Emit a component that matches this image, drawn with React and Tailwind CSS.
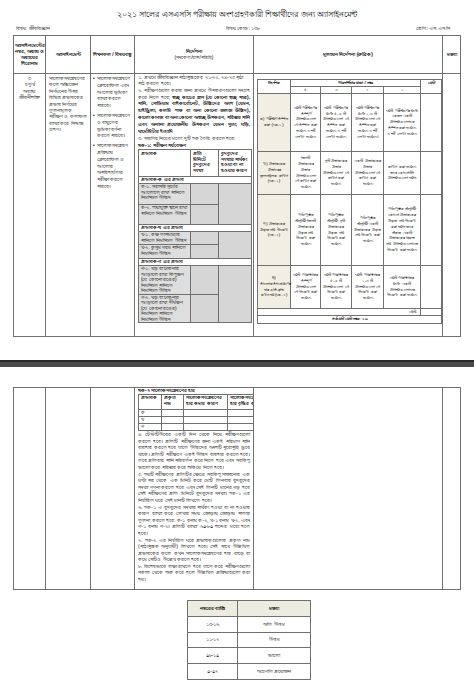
const line = 'border-[#707070]'

const rubric = [
  {
    label: 'ক) পরীক্ষণ সম্পন্ন করা (ছক-১)',
    h: 'h-[58px]',
    cells: [
      'ছয়টি পরীক্ষণের সম্পূর্ণ প্রক্রিয়াগুলো যে সম্পন্ন করা হয়েছে ও শর্ট লেখা হয়েছে',
      'ছয়টি পরীক্ষণের মধ্যে ৪-৫ টি প্রক্রিয়াগুলো যে সম্পন্ন করা হয়েছে ও শর্ট লেখা হয়েছে',
      'ছয়টি পরীক্ষণের মধ্যে ১-৩ টি প্রক্রিয়াগুলো যে সম্পন্ন করা হয়েছে ও শর্ট লেখা হয়েছে।',
      'ছয়টি পরীক্ষণের মধ্যে কেবল একটি প্রক্রিয়াগুলোকে সম্পন্ন করা হয়েছে ও শর্ট লেখা হয়েছে',
    ],
  },
  {
    label: 'খ) প্রভাবকের প্রভাবের তুলনামূলক ব্যাখ্যা (ছক-১)',
    h: 'h-[43px]',
    cells: [
      'তিনটি প্রভাবকের প্রভাব প্রক্রিয়াগুলো যে ব্যাখ্যা করা হয়েছে',
      'দুটি প্রভাবকের প্রভাব প্রক্রিয়াগুলো যে ব্যাখ্যা করা হয়েছে',
      'একটি প্রভাবকের প্রভাব প্রক্রিয়াগুলো যে ব্যাখ্যা করা হয়েছে',
      'ব্যাখ্যা করা হয়েছে তবে কোনোটিই প্রক্রিয়াগুলো হয়নি',
    ],
  },
  {
    label: 'গ) প্রভাবকের প্রকৃত নাম উল্লেখ (ছক-২)',
    h: 'h-[71px]',
    cells: [
      'পাঠ্যপুস্তক অনুযায়ী তিনটি প্রভাবকের প্রকৃত নাম উল্লেখ করা হয়েছে',
      'পাঠ্যপুস্তক অনুযায়ী দুটি প্রভাবকের প্রকৃত নাম উল্লেখ করা হয়েছে',
      'পাঠ্যপুস্তক অনুযায়ী একটি প্রভাবকের প্রকৃত নাম উল্লেখ করা হয়েছে',
      'পাঠ্যপুস্তক অনুযায়ী কোনো প্রভাবকের প্রকৃত নাম উল্লেখ করা হয়নি তবে অন্তত একটি প্রভাবকের বিকল্প নাম প্রক্রিয়াগুলোতে উল্লেখ করা হয়েছে',
    ],
  },
  {
    label: 'ঘ) সালোকসংশ্লেষণের হার হ্রাস-বৃদ্ধি কখন হয় (ছক-২)',
    h: 'h-[43px]',
    cells: [
      'ছয়টি পরিস্থিতির সম্পূর্ণ প্রক্রিয়াগুলো যে উল্লেখ করা হয়েছে',
      'ছয়টি পরিস্থিতির ৪-৫ টি প্রক্রিয়াগুলো যে উল্লেখ করা হয়েছে',
      'ছয়টি পরিস্থিতির ১-৩ টি প্রক্রিয়াগুলো যে উল্লেখ করা হয়েছে',
      'ছয়টি পরিস্থিতির মধ্যে একটি প্রক্রিয়াগুলোতে উল্লেখ করা হয়েছে',
    ],
  },
]

const groups = [
  {
    title: 'প্রভাবক-ক এর প্রভাব',
    rows: [
      { text: 'ক-১. সরাসরি সূর্যের আলোতে রাখা পানিতে নিমজ্জিত উদ্ভিদ', h: 'h-[21px]' },
      { text: 'ক-২. ছায়াযুক্ত স্থানে রাখা পানিতে নিমজ্জিত উদ্ভিদ', h: 'h-[20px]' },
    ],
  },
  {
    title: 'প্রভাবক-খ এর প্রভাব',
    rows: [
      { text: 'খ-১. কক্ষ তাপমাত্রার পানিতে নিমজ্জিত উদ্ভিদ', h: 'h-[13px]' },
      { text: 'খ-২. কুসুম গরম পানিতে নিমজ্জিত উদ্ভিদ', h: 'h-[14px]' },
    ],
  },
  {
    title: 'প্রভাবক-গ এর প্রভাব',
    rows: [
      { text: 'গ-১. খড় বা ঢাকনার আড়ালে রাখা কিছুক্ষণ (যে কোনো রঙের) নিমজ্জিত পানিতে নিমজ্জিত উদ্ভিদ', h: 'h-[28px]' },
      { text: 'গ-২. খড় বা ঢাকনার আড়ালে রাখা দীর্ঘক্ষণ (যে কোনো রঙের) নিমজ্জিত পানিতে নিমজ্জিত উদ্ভিদ', h: 'h-[28px]' },
    ],
  },
]

const grades = [
  ['১৩-১৬', 'অতি উত্তম'],
  ['১১-১২', 'উত্তম'],
  ['০৮-১০', 'ভালো'],
  ['০-০৭', 'অগ্রগতি প্রয়োজন'],
]

function Rubric() {
  return (
    <table className="w-[184px] table-fixed border-collapse text-[4.3px] leading-[5.8px]">
      <colgroup>
        <col className="w-[33px]" />
        <col className="w-[30px]" />
        <col className="w-[31px]" />
        <col className="w-[32px]" />
        <col className="w-[37px]" />
        <col className="w-[21px]" />
      </colgroup>
      <tbody>
        <tr className="h-[6px] font-bold">
          <td rowSpan={2} className={`border ${line} text-center align-top`}>নির্দেশক</td>
          <td colSpan={4} className={`border ${line} text-center`}>পারদর্শিতার মাত্রা / নম্বর</td>
          <td rowSpan={2} className={`border ${line} text-center align-top`}>মোট</td>
        </tr>
        <tr className="h-[6px]">
          {['৪', '৩', '২', '১'].map((n) => (
            <td key={n} className={`border ${line} text-center`}>{n}</td>
          ))}
        </tr>
        {rubric.map((r) => (
          <tr key={r.label} className={r.h}>
            <td className={`border ${line} bg-[#f1efe4] px-[2px] text-center`}>{r.label}</td>
            {r.cells.map((c, i) => (
              <td key={i} className={`border ${line} px-[2px] text-center`}>{c}</td>
            ))}
            <td className={`border ${line}`} />
          </tr>
        ))}
        <tr className="h-[7px]">
          <td colSpan={5} className={`border ${line} pr-[3px] text-right`}>মোট-</td>
          <td className={`border ${line}`} />
        </tr>
        <tr className="h-[8px]">
          <td colSpan={6} className={`border ${line} text-center font-bold`}>সর্বমোট মোট নম্বর: ১৬</td>
        </tr>
      </tbody>
    </table>
  )
}

function ObservationTable() {
  return (
    <table className="w-[113px] table-fixed border-collapse text-[4.5px] leading-[5.5px]">
      <colgroup>
        <col className="w-[52px]" />
        <col className="w-[28px]" />
        <col className="w-[33px]" />
      </colgroup>
      <tbody>
        <tr className="h-[27px] font-bold">
          <td className={`border ${line} px-[2px] pt-[1px] align-top`}>প্রভাবক</td>
          <td className={`border ${line} px-[2px] pt-[1px] align-top`}>প্রতি মিনিটে বুদবুদের সংখ্যা</td>
          <td className={`border ${line} px-[2px] pt-[1px] align-top`}>বুদবুদের সংখ্যার পার্থক্য হওয়া বা না হওয়ার কারণ</td>
        </tr>
        {groups.map((g) => [
          <tr key={g.title} className="h-[7px]">
            <td colSpan={3} className={`border ${line} px-[2px] font-bold`}>{g.title}</td>
          </tr>,
          ...g.rows.map((r, i) => (
            <tr key={r.text} className={r.h}>
              <td className={`border ${line} bg-[#dedede] px-[2px] align-top`}>{r.text}</td>
              <td className={`border ${line} bg-[#d6d6d6]`} />
              {i === 0 && <td rowSpan={2} className={`border ${line} bg-[#d6d6d6]`} />}
            </tr>
          )),
        ])}
      </tbody>
    </table>
  )
}

function PageOne() {
  return (
    <div className="pt-[7px]">
      <h1 className="h-[16px] text-center text-[8.2px] leading-[16px]">
        ২০২১ সালের এসএসসি পরীক্ষায় অংশগ্রহণকারী শিক্ষার্থীদের জন্য অ্যাসাইনমেন্ট
      </h1>
      <div className="flex h-[12px] items-center px-[16px] text-[5px]">
        <span className="w-[210px]">বিষয়: জীববিজ্ঞান</span>
        <span>বিষয় কোড: ১৩৮</span>
        <span className="ml-auto pr-[8px]">শ্রেণি: এস.এস.সি</span>
      </div>

      <div className={`ml-[13px] w-[448px] border ${line}`}>
        {/* header */}
        <div className={`flex h-[38px] border-b ${line} text-[4.8px] leading-[6px] font-bold`}>
          <div className={`w-[32px] border-r ${line} flex items-center justify-center px-[1px] text-center`}>
            অ্যাসাইনমেন্টের নম্বর, অধ্যায় ও অধ্যায়ের শিরোনাম
          </div>
          <div className={`w-[45px] border-r ${line} flex items-center justify-center`}>অ্যাসাইনমেন্ট</div>
          <div className={`w-[44px] border-r ${line} flex items-center justify-center text-center`}>
            শিখনফল / বিষয়বস্তু
          </div>
          <div className={`w-[119px] border-r ${line} flex flex-col items-center justify-center`}>
            <span>নির্দেশনা</span>
            <span className="font-normal">(সংকেত/ধাপ/পরিধি)</span>
          </div>
          <div className={`w-[189px] border-r ${line} flex items-center justify-center`}>
            মূল্যায়ন নির্দেশনা (রুব্রিক)
          </div>
          <div className="flex flex-1 items-center justify-center">মন্তব্য</div>
        </div>

        {/* body */}
        <div className="flex h-[262px] text-[4.8px] leading-[6.4px]">
          <div className={`w-[32px] border-r ${line} pt-[2px] text-center`}>
            <p>৩</p>
            <p>চতুর্থ</p>
            <p>অধ্যায়:</p>
            <p>জীবনীশক্তি</p>
          </div>
          <div className={`w-[45px] border-r ${line} px-[3px] pt-[2px]`}>
            সালোকসংশ্লেষণের ফলে অক্সিজেন নির্গমনের উপর বিভিন্ন প্রভাবকের প্রভাব নির্ণয়ের তুলনামূলক পরীক্ষণ ও ফলাফল ব্যাখ্যা করে সিদ্ধান্ত গ্রহণ।
          </div>
          <div className={`w-[44px] border-r ${line} px-[2px] pt-[2px] leading-[6.8px]`}>
            <ul className="flex flex-col gap-[3px]">
              <li className="flex gap-[2px]"><span>•</span><span>সালোকসংশ্লেষণে ক্লোরোফিল এবং আলোর ভূমিকা ব্যাখ্যা করতে পারবে।</span></li>
              <li className="flex gap-[2px]"><span>•</span><span>সালোকসংশ্লেষণে ও বায়ুতের ভূমিকা বর্ণনা করতে পারবে।</span></li>
              <li className="flex gap-[2px]"><span>•</span><span>সালোকসংশ্লেষণ প্রক্রিয়ায় ক্লোরোফিল ও আলোর অপরিহার্যতার পরীক্ষা করতে পারবে।</span></li>
            </ul>
          </div>
          <div className={`w-[119px] border-r ${line} px-[3px] pt-[1px]`}>
            <p>১. প্রথমে জীববিজ্ঞান পাঠ্যপুস্তকের ৭১-৭২, ৭৪-৭৫ পৃষ্ঠা পাঠ করতে হবে।</p>
            <p className="text-justify leading-[6.8px]">
              ২. পরীক্ষণগুলো করার জন্য প্রথমে উপকরণগুলো সংগ্রহ করে নিতে হবে;{' '}
              <b>
                স্বচ্ছ কাচের গ্লাস (যে কোনো স্বচ্ছ পাত্র), পানি, সোডিয়াম বাইকার্বোনেট, উদ্ভিদের অংশ (যেমন, হাইড্রিলা, কলমি শাক বা অন্য কোনো জলজ উদ্ভিদ), কালো কাগজ বা অন্য কোনো অস্বচ্ছ উপকরণ, পরিষ্কার পানি এবং অন্যান্য প্রয়োজনীয় উপকরণ যেমন সুতা, ঘড়ি, থার্মোমিটার ইত্যাদি
              </b>
            </p>
            <p className="mt-[1px]">৩. সারণির নিচের মতো দুটি ছক তৈরি করতে হবে:</p>
            <p className="font-bold">ছক-১: পরীক্ষণ পর্যবেক্ষণ</p>
            <ObservationTable />
          </div>
          <div className={`w-[189px] border-r ${line} px-[3px] pt-[5px]`}>
            <Rubric />
          </div>
          <div className="flex-1" />
        </div>
      </div>
    </div>
  )
}

function PageTwo() {
  return (
    <div className={`mt-[20px] ml-[13px] w-[448px] border ${line}`}>
      <div className="flex h-[201px] text-[4.8px] leading-[6.6px]">
        <div className={`w-[32px] border-r ${line}`} />
        <div className={`w-[45px] border-r ${line}`} />
        <div className={`w-[44px] border-r ${line}`} />
        <div className={`w-[119px] border-r ${line} overflow-hidden pl-[3px]`}>
          <p className="font-bold leading-[6px]">ছক-২ সালোকসংশ্লেষণের হার</p>
          <table className="w-[130px] table-fixed border-collapse text-[4.5px] leading-[5.5px]">
            <colgroup>
              <col className="w-[23px]" />
              <col className="w-[22px]" />
              <col className="w-[44px]" />
              <col className="w-[41px]" />
            </colgroup>
            <tbody>
              <tr className="h-[15px] font-bold">
                <td className={`border ${line} px-[2px] align-top`}>প্রভাবক</td>
                <td className={`border ${line} px-[2px] align-top`}>প্রকৃত নাম</td>
                <td className={`border ${line} px-[2px] align-top`}>সালোকসংশ্লেষণের হার কমার কারণ</td>
                <td className={`border ${line} px-[2px] align-top`}>সালোকসংশ্লেষণের হার বৃদ্ধির কারণ</td>
              </tr>
              {['ক', 'খ', 'গ'].map((k) => (
                <tr key={k} className="h-[7px]">
                  <td className={`border ${line} px-[2px]`}>{k}</td>
                  <td className={`border ${line}`} />
                  <td className={`border ${line}`} />
                  <td className={`border ${line}`} />
                </tr>
              ))}
            </tbody>
          </table>
          <div className="w-[112px] pt-[1px] text-justify">
            <p>
              ৪. টেস্টটিউবের একটি দিন থেকে নিয়ে পরীক্ষণগুলো করতে হবে। প্রতিটি পরীক্ষণের জন্য একই পরিমাণ পানি ব্যবহার করতে হবে যাতে উদ্ভিদের অংশটি পুরোপুরি ডুবে থাকে। প্রতিটি পরীক্ষণে একই উদ্ভিদ ব্যবহার করতে হবে। তবে প্রতিবার পানি পরিবর্তন করে নিতে হবে এবং সবকিছু ভালো করে পরিষ্কার করে শুকিয়ে নিতে হবে।
            </p>
            <p>
              ৫. ছয়টি পরীক্ষণের প্রতিটির ক্ষেত্রে সবকিছু সাজানোর এক ঘণ্টা পর থেকে এক মিনিট করে মোট তিনবার বুদবুদের সংখ্যা গণনা করতে হবে এবং সেই তিনটি মানের গড় হবে সেই পরীক্ষণের প্রতি মিনিটে বুদবুদের সংখ্যা। ছক-১ এর নির্ধারিত ঘরে সেই মানটি লিখতে হবে।
            </p>
            <p>
              ৬. ছক-১ এ বুদবুদের সংখ্যার পার্থক্য হওয়া বা না হওয়ার কারণ ব্যাখ্যা করে লেখার সময় জোড়ায় জোড়ায় পাতার তুলনা করতে হবে: ক-১ বনাম ক-২, খ-১ বনাম খ-২, এবং গ-১ বনাম গ-২। প্রতিটি ব্যাখ্যা ৬০-৮০ শব্দের মধ্যে হতে হবে।
            </p>
            <p>
              ৭. ছক-২ এর নির্ধারিত ঘরে প্রভাবকগুলোর প্রকৃত নাম (পাঠ্যপুস্তক অনুযায়ী) লিখতে হবে। সেই সাথে উল্লিখিত প্রভাবকের ফলে কখন সালোকসংশ্লেষণের হার বাড়ে বা কমে সেটিও উল্লেখ করতে হবে।
            </p>
            <p>
              ৮. বিশেষভাবে লক্ষ্য রাখতে হবে যাতে করে পরীক্ষণগুলো সকাল থেকে শুরু করে হলে উল্লিখিত প্রক্রিয়াগুলো করা হয়।
            </p>
          </div>
        </div>
        <div className={`w-[189px] border-r ${line}`} />
        <div className="flex-1" />
      </div>
    </div>
  )
}

function Grades() {
  return (
    <div className={`mt-[10px] ml-[187px] w-[124px] border ${line} text-[5px]`}>
      <div className={`flex h-[16px] border-b ${line} bg-[#eeece1] font-bold`}>
        <div className={`flex w-[50px] items-center justify-center border-r ${line}`}>নম্বরের ব্যাপ্তি</div>
        <div className="flex flex-1 items-center justify-center">মন্তব্য</div>
      </div>
      {grades.map(([range, note], i) => (
        <div key={range} className={`flex h-[15.5px] ${i < grades.length - 1 ? `border-b ${line}` : ''}`}>
          <div className={`flex w-[50px] items-center justify-center border-r ${line}`}>{range}</div>
          <div className="flex flex-1 items-center justify-center">{note}</div>
        </div>
      ))}
    </div>
  )
}

export default function App() {
  return (
    <div className="h-[681px] w-[474px] overflow-hidden bg-white text-black font-['Liberation_Sans','Noto_Sans',sans-serif]">
      <PageOne />
      <div className="mt-[23px] h-[7px] border-t-[2px] border-[#2a2a2a] bg-[#4b4b4b]" />
      <PageTwo />
      <Grades />
    </div>
  )
}
